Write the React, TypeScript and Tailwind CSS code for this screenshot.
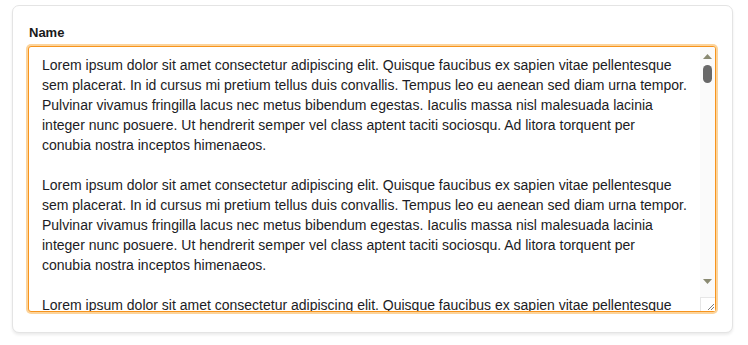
import React from "react";

const P = [
  "Lorem ipsum dolor sit amet consectetur adipiscing elit. Quisque faucibus ex sapien vitae pellentesque",
  "sem placerat. In id cursus mi pretium tellus duis convallis. Tempus leo eu aenean sed diam urna tempor.",
  "Pulvinar vivamus fringilla lacus nec metus bibendum egestas. Iaculis massa nisl malesuada lacinia",
  "integer nunc posuere. Ut hendrerit semper vel class aptent taciti sociosqu. Ad litora torquent per",
  "conubia nostra inceptos himenaeos.",
].join("\n");

const text = Array.from({ length: 26 }, () => P).join("\n\n");

export default function App() {
  return (
    <div className="w-[748px] h-[345px] bg-white pt-[5px] pl-[12px] font-['Liberation_Sans',Arial,sans-serif]">
      <div className="w-[721px] h-[328px] rounded-[7px] border border-[#e4e4e4] shadow-[0_2px_3px_rgba(0,0,0,0.08)] bg-white px-[15px] pt-[17px]">
        <label className="block text-[13px] font-bold leading-[20px] text-[#1a1a1a] mb-[3px] pl-[1px]">Name</label>
        <div className="relative w-[688px] h-[266px]">
          <textarea
            readOnly
            value={text}
            className="block w-full h-full resize-none overflow-hidden rounded-[3px] border border-[#f7941d] ring-2 ring-[#fcd49c] outline-none bg-white pl-[13px] pr-[22px] pt-[8px] text-[14px] leading-[20px] text-[#1c1c24] font-['Liberation_Sans',Arial,sans-serif]"
          />
          <div className="absolute right-[1px] top-[1px] bottom-[1px] w-[15px] flex flex-col bg-[#fafafa] rounded-tr-[2px] rounded-br-[2px]">
            <div className="h-[17px] flex items-center justify-center pt-[2px]">
              <svg width="9" height="5" viewBox="0 0 9 5"><path d="M4.5 0 L9 5 L0 5 Z" fill="#8a8a72" /></svg>
            </div>
            <div className="flex-1 flex flex-col items-center pt-[1px]">
              <div className="w-[9px] h-[18px] rounded-full bg-[#686868]" />
            </div>
            <div className="h-[20px] flex items-start justify-center pt-[2px]">
              <svg width="9" height="5" viewBox="0 0 9 5"><path d="M0 0 L9 0 L4.5 5 Z" fill="#8a8a72" /></svg>
            </div>
            <div className="h-[14px] border-t border-l border-[#e6e6e6] bg-white flex items-end justify-end">
              <svg width="10" height="10" viewBox="0 0 10 10">
                <path d="M9 3 L3 9 M9 6 L6 9" stroke="#7a7a7a" strokeWidth="1" />
              </svg>
            </div>
          </div>
        </div>
      </div>
    </div>
  );
}
